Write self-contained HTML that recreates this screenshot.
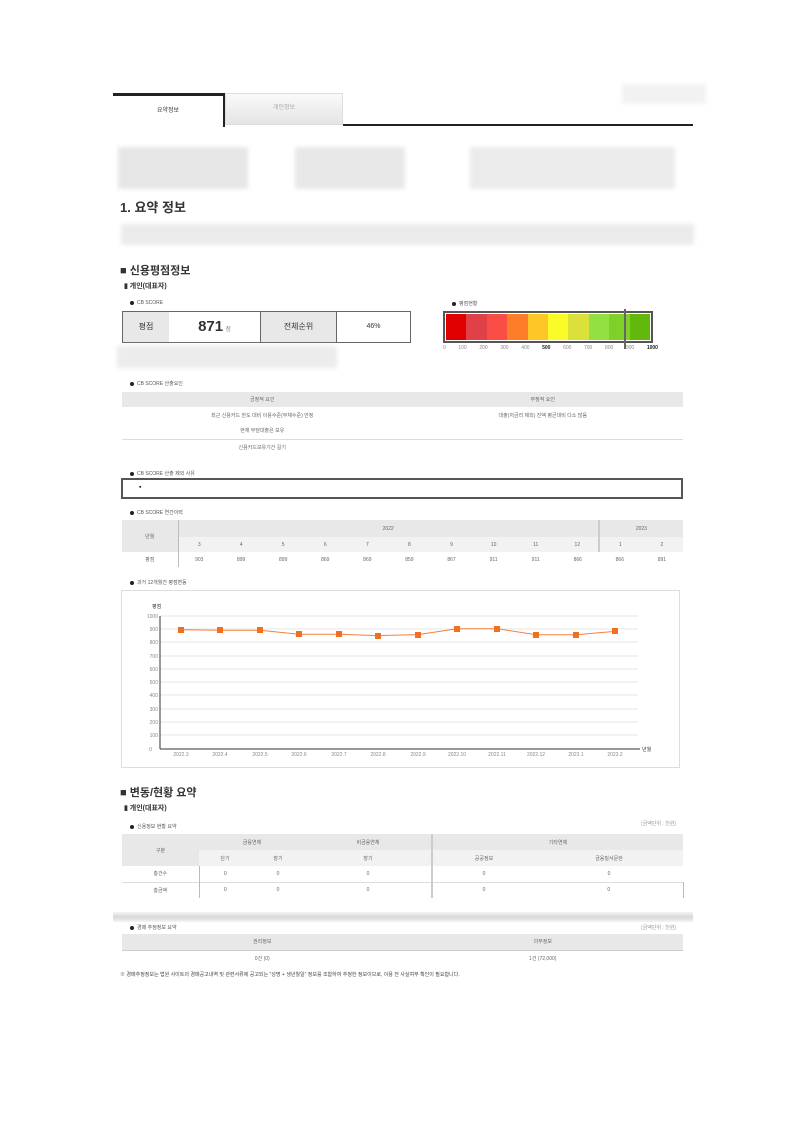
<!DOCTYPE html>
<html><head><meta charset="utf-8"><style>
*{margin:0;padding:0;box-sizing:border-box}
body{width:793px;height:1122px;background:#fff;position:relative;overflow:hidden;font-family:"Liberation Sans","Noto Sans CJK KR",sans-serif;color:#333}
.a{position:absolute;white-space:nowrap}
.blur{position:absolute;background:#ececec;filter:blur(2px)}
.s5{font-size:5px;color:#555}
.dot::before{content:"";display:inline-block;width:4px;height:4px;border-radius:50%;background:#222;margin-right:3px;vertical-align:middle}
table{border-collapse:collapse;position:absolute;font-size:5px;color:#666;text-align:center;table-layout:fixed}
td{padding:0}
</style></head><body>
<!-- tabs -->
<div class="a" style="left:113px;top:93px;width:112px;height:34px;border-top:3px solid #222;border-right:2px solid #222;background:#fff;font-size:6px;color:#333;text-align:center;line-height:30px">요약정보</div>
<div class="a" style="left:225px;top:93px;width:118px;height:32px;border:1px solid #ddd;background:linear-gradient(#fafafa,#e4e4e4);font-size:6px;color:#aaa;text-align:center;line-height:28px">개인정보</div>
<div class="a" style="left:343px;top:124px;width:350px;height:2px;background:#222"></div>
<div class="blur" style="left:622px;top:84px;width:84px;height:20px;background:#f2f2f2"></div>
<!-- blurred header -->
<div class="blur" style="left:118px;top:147px;width:130px;height:42px;background:#e6e6e6"></div>
<div class="blur" style="left:295px;top:147px;width:110px;height:42px;background:#e8e8e8"></div>
<div class="blur" style="left:470px;top:147px;width:205px;height:42px;background:#ebebeb"></div>
<div class="a" style="left:120px;top:197px;font-size:13px;font-weight:bold;color:#333">1. 요약 정보</div>
<div class="blur" style="left:121px;top:224px;width:573px;height:21px;background:#ebebeb"></div>
<!-- 신용평점 -->
<div class="a" style="left:120px;top:262px;font-size:11px;font-weight:bold;color:#333">■ 신용평점정보</div>
<div class="a" style="left:124px;top:281px;font-size:7px;font-weight:bold;color:#333">▮ 개인(대표자)</div>
<div class="a s5 dot" style="left:130px;top:300px">CB SCORE</div>
<div class="a" style="left:122px;top:311px;width:289px;height:32px;border:1px solid #666;display:flex;font-size:8px;color:#333">
<div style="width:46px;background:#e8e8e8;text-align:center;line-height:30px">평점</div>
<div style="width:92px;text-align:center;line-height:30px;border-right:1px solid #666"><b style="font-size:15px">871</b> <span style="font-size:6px;color:#888">점</span></div>
<div style="width:76px;background:#e8e8e8;text-align:center;line-height:30px;border-right:1px solid #666">전체순위</div>
<div style="flex:1;text-align:center;line-height:30px;font-size:7px">46%</div></div>
<div class="a s5 dot" style="left:452px;top:300px">평점현황</div>
<div class="a" style="left:443px;top:311px;width:210px;height:32px;border:2px solid #555;display:flex;padding:1px">
<div style="flex:1;background:#e00000"></div><div style="flex:1;background:#e04048"></div><div style="flex:1;background:#fa4d45"></div><div style="flex:1;background:#fd7d28"></div><div style="flex:1;background:#ffc628"></div><div style="flex:1;background:#fbfb28"></div><div style="flex:1;background:#dbe03a"></div><div style="flex:1;background:#93e042"></div><div style="flex:1;background:#7fd12a"></div><div style="flex:1;background:#63b80c"></div></div>
<div class="a" style="left:624px;top:309px;width:2px;height:40px;background:#666"></div>
<div class="a" style="left:443px;top:345px;width:215px;font-size:5px;color:#888;display:flex;justify-content:space-between"><span>0</span><span>100</span><span>200</span><span>300</span><span>400</span><b style="color:#222">500</b><span>600</span><span>700</span><span>800</span><span>900</span><b style="color:#222">1000</b></div>
<div class="blur" style="left:117px;top:346px;width:220px;height:22px;background:#ececec"></div>
<!-- 산출요인 -->
<div class="a s5 dot" style="left:130px;top:380px">CB SCORE 산출요인</div>
<table style="left:122px;top:392px;width:561px">
<tr style="background:#e8e8e8;height:15px"><td>긍정적 요인</td><td>부정적 요인</td></tr>
<tr style="height:16px"><td>최근 신용카드 한도 대비 이용수준(부채수준) 안정</td><td>대출(저금리 제외) 잔액 평균대비 다소 많음</td></tr>
<tr style="height:16px;border-bottom:1px solid #ddd"><td>현재 무담대출은 보유</td><td></td></tr>
<tr style="height:16px"><td>신용카드보유기간 길기</td><td></td></tr></table>
<div class="a s5 dot" style="left:130px;top:470px">CB SCORE 산출 제외 사유</div>
<div class="a" style="left:121px;top:478px;width:562px;height:21px;border:2px solid #555;font-size:7px;padding:4px 16px;color:#222">▪</div>
<div class="a s5 dot" style="left:130px;top:509px">CB SCORE 연간이력</div>
<table style="left:122px;top:520px;width:561px">
<colgroup><col style="width:56px"><col span="12"></colgroup>
<tr style="height:17px;background:#e8e8e8"><td rowspan="2" style="border-right:1px solid #bbb">년월</td><td colspan="10" style="border-right:2px solid #ccc">2022</td><td colspan="2">2023</td></tr>
<tr style="height:15px;background:#f2f2f2"><td>3</td><td>4</td><td>5</td><td>6</td><td>7</td><td>8</td><td>9</td><td>10</td><td>11</td><td style="border-right:2px solid #ccc">12</td><td>1</td><td>2</td></tr>
<tr style="height:15px"><td style="border-right:1px solid #bbb">평점</td><td>903</td><td>899</td><td>899</td><td>869</td><td>869</td><td>859</td><td>867</td><td>911</td><td>911</td><td>866</td><td>866</td><td>891</td></tr></table>
<div class="a s5 dot" style="left:130px;top:579px">과거 12개월간 평점변동</div>
<svg class="a" style="left:0;top:0" width="793" height="1122">
<rect x="121.5" y="590.5" width="558" height="177" fill="none" stroke="#ddd"/>
<g stroke="#e6e6e6"><line x1="160" y1="616" x2="638" y2="616"/><line x1="160" y1="629" x2="638" y2="629"/><line x1="160" y1="642" x2="638" y2="642"/><line x1="160" y1="656" x2="638" y2="656"/><line x1="160" y1="669" x2="638" y2="669"/><line x1="160" y1="682" x2="638" y2="682"/><line x1="160" y1="695" x2="638" y2="695"/><line x1="160" y1="709" x2="638" y2="709"/><line x1="160" y1="722" x2="638" y2="722"/><line x1="160" y1="735" x2="638" y2="735"/></g>
<line x1="160" y1="616" x2="160" y2="749" stroke="#333"/><line x1="160" y1="749" x2="640" y2="749" stroke="#333"/>
<g font-size="5" fill="#888" text-anchor="end"><text x="158" y="618">1000</text><text x="158" y="631">900</text><text x="158" y="644">800</text><text x="158" y="658">700</text><text x="158" y="671">600</text><text x="158" y="684">500</text><text x="158" y="697">400</text><text x="158" y="711">300</text><text x="158" y="724">200</text><text x="158" y="737">100</text><text x="152" y="751">0</text></g>
<text x="152" y="608" font-size="5" fill="#333">평점</text><text x="642" y="751" font-size="5" fill="#333">년월</text>
<g font-size="5" fill="#888" text-anchor="middle"><text x="181" y="756">2022.3</text><text x="220" y="756">2022.4</text><text x="260" y="756">2022.5</text><text x="299" y="756">2022.6</text><text x="339" y="756">2022.7</text><text x="378" y="756">2022.8</text><text x="418" y="756">2022.9</text><text x="457" y="756">2022.10</text><text x="497" y="756">2022.11</text><text x="536" y="756">2022.12</text><text x="576" y="756">2023.1</text><text x="615" y="756">2023.2</text></g>
<polyline fill="none" stroke="#f08040" stroke-width="1" points="181,629.8 220,630.3 260,630.3 299,634.3 339,634.3 378,635.6 418,634.6 457,628.7 497,628.7 536,634.7 576,634.7 615,631.4"/>
<g fill="#f07020"><rect x="178" y="627" width="6" height="6"/><rect x="217" y="627" width="6" height="6"/><rect x="257" y="627" width="6" height="6"/><rect x="296" y="631" width="6" height="6"/><rect x="336" y="631" width="6" height="6"/><rect x="375" y="633" width="6" height="6"/><rect x="415" y="632" width="6" height="6"/><rect x="454" y="626" width="6" height="6"/><rect x="494" y="626" width="6" height="6"/><rect x="533" y="632" width="6" height="6"/><rect x="573" y="632" width="6" height="6"/><rect x="612" y="628" width="6" height="6"/></g>
</svg>
<!-- 변동 -->
<div class="a" style="left:120px;top:784px;font-size:11px;font-weight:bold;color:#333">■ 변동/현황 요약</div>
<div class="a" style="left:124px;top:803px;font-size:7px;font-weight:bold;color:#333">▮ 개인(대표자)</div>
<div class="a s5 dot" style="left:130px;top:823px">신용정보 현황 요약</div>
<div class="a s5" style="left:641px;top:820px;color:#999">(금액단위 : 천원)</div>
<table style="left:122px;top:834px;width:561px">
<colgroup><col style="width:77px"><col style="width:52px"><col style="width:54px"><col style="width:127px"><col style="width:103px"><col style="width:148px"></colgroup>
<tr style="height:16px;background:#e8e8e8"><td rowspan="2">구분</td><td colspan="2">금융연체</td><td style="border-right:2px solid #ccc">비금융연체</td><td colspan="2">기타연체</td></tr>
<tr style="height:16px;background:#f2f2f2"><td>단기</td><td>장기</td><td style="border-right:2px solid #ccc">장기</td><td>공공정보</td><td>금융질서문란</td></tr>
<tr style="height:16px;border-bottom:1px solid #ddd"><td style="border-right:1px solid #bbb">총건수</td><td>0</td><td>0</td><td style="border-right:2px solid #ccc">0</td><td>0</td><td>0</td></tr>
<tr style="height:16px"><td style="border-right:1px solid #bbb">총금액</td><td>0</td><td>0</td><td style="border-right:2px solid #ccc">0</td><td>0</td><td style="border-right:1px solid #bbb">0</td></tr></table>
<div class="a" style="left:113px;top:912px;width:580px;height:10px;background:linear-gradient(#f4f4f4,#d8d8d8,#f4f4f4)"></div>
<div class="a s5 dot" style="left:130px;top:924px">경매 추정정보 요약</div>
<div class="a s5" style="left:641px;top:924px;color:#999">(금액단위 : 천원)</div>
<table style="left:122px;top:934px;width:561px">
<tr style="height:16px;background:#e8e8e8;border-bottom:1px solid #ccc"><td>권리정보</td><td>의무정보</td></tr>
<tr style="height:16px"><td>0건 (0)</td><td>1건 (72,000)</td></tr></table>
<div class="a" style="left:120px;top:971px;font-size:5px;color:#444">※ 경매추정정보는 법원 사이트의 경매공고내역 및 관련서류에 공고되는 "성명 + 생년월일" 정보를 조합하여 추정한 정보이므로, 이용 전 사실여부 확인이 필요합니다.</div>
</body></html>
